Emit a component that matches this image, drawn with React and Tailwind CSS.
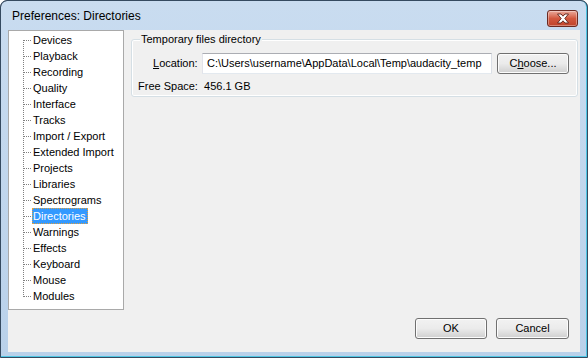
import React from 'react'

const ITEMS = [
  'Devices', 'Playback', 'Recording', 'Quality', 'Interface', 'Tracks',
  'Import / Export', 'Extended Import', 'Projects', 'Libraries', 'Spectrograms',
  'Directories', 'Warnings', 'Effects', 'Keyboard', 'Mouse', 'Modules',
]

const SELECTED = 'Directories'

const font = { fontFamily: '"Liberation Sans", Arial, sans-serif' }

function Branch({ first, last }) {
  return (
    <svg width="9" height="16" className="shrink-0" shapeRendering="crispEdges">
      <line x1="0.5" y1={first ? 8 : 0} x2="0.5" y2={last ? 9 : 16} stroke="#808080" strokeDasharray="1 1" />
      <line x1="1" y1="8.5" x2="9" y2="8.5" stroke="#808080" strokeDasharray="1 1" />
    </svg>
  )
}

function Button({ children, className = '' }) {
  return (
    <button
      className={`h-[21px] rounded-[3px] border border-[#707070] bg-gradient-to-b from-[#f2f2f2] via-[#ebebeb] to-[#cfcfcf]
                  shadow-[inset_0_0_0_1px_#fcfcfc] text-[11px] text-black ${className}`}
    >
      {children}
    </button>
  )
}

function CloseButton() {
  return (
    <div className="w-[31px] h-[17px] rounded-[3px] border border-[#6b2a22] bg-gradient-to-b from-[#e9a99b] via-[#d2583f] to-[#c0432a]
                    shadow-[inset_0_0_0_1px_rgba(255,255,255,0.35)] flex items-center justify-center mt-[9px]">
      <svg width="14" height="11" viewBox="0 0 14 11">
        <path d="M1.5 1 L5 1 L7 3.2 L9 1 L12.5 1 L8.8 5.5 L12.5 10 L9 10 L7 7.8 L5 10 L1.5 10 L5.2 5.5 Z"
              fill="#ffffff" stroke="#5a2019" strokeWidth="0.9" strokeLinejoin="round" />
      </svg>
    </div>
  )
}

export default function App() {
  return (
    <div className="w-[588px] h-[358px] bg-white" style={font}>
      <div className="w-full h-full border border-[#354a60] rounded-t-[7px] bg-[#2f4258] overflow-hidden">
        <div className="w-full h-full border-r border-b border-[#4fc6e4] rounded-t-[6px] bg-gradient-to-b from-[#c9dcf0] to-[#b9d1ea] flex flex-col">
          {/* Title bar */}
          <div className="h-[29px] flex items-start pl-[11px] pr-[8px] shrink-0">
            <span className="text-[12px] text-black mt-[8px] flex-1 leading-[14px]">Preferences: Directories</span>
            <CloseButton />
          </div>

          {/* Client area */}
          <div className="ml-[7px] w-[572px] h-[322px] bg-[#f0f0f0] flex flex-col">
            <div className="flex">
              {/* Tree */}
              <div className="w-[117px] h-[280px] bg-white border border-[#a9a9a9] pt-[1px] pl-[14px]">
                {ITEMS.map((item, i) => (
                  <div key={item} className="flex items-center h-[16px]">
                    <Branch first={i === 0} last={i === ITEMS.length - 1} />
                    <span
                      className={`h-[16px] leading-[14px] text-[11px] whitespace-nowrap border
                        ${item === SELECTED
                          ? 'bg-[#3399ff] text-white border-dotted border-[#e0a040] pr-[1px]'
                          : 'text-black border-transparent'}`}
                    >
                      {item}
                    </span>
                  </div>
                ))}
              </div>

              {/* Page */}
              <div className="flex-1 pl-[7px] pr-[2px] pt-[9px]">
                <div className="relative border border-[#d5dfe5] rounded-[3px] shadow-[inset_0_0_0_1px_#ffffff] pt-[13px] pb-[4px] pl-[5px] pr-[8px]">
                  <span className="absolute -top-[7px] left-[8px] bg-[#f0f0f0] px-[1px] text-[11px] leading-[13px] text-black">
                    Temporary files directory
                  </span>
                  <div className="flex items-center h-[21px]">
                    <span className="text-[11px] text-black ml-[16px] w-[44px]"><u>L</u>ocation:</span>
                    <div className="ml-[5px] w-[290px] h-[21px] bg-white border border-[#abadb3] border-l-[#e2e3ea] border-r-[#dbdfe6] border-b-[#e3e9ef] flex items-center pl-[4px] text-[11px] text-black whitespace-nowrap overflow-hidden">
                      C:\Users\username\AppData\Local\Temp\audacity_temp
                    </div>
                    <Button className="ml-[5px] w-[72px]">C<u>h</u>oose...</Button>
                  </div>
                  <div className="mt-[6px] text-[11px] leading-[12px] text-black pl-[1px]">
                    Free Space:&nbsp; 456.1 GB
                  </div>
                </div>
              </div>
            </div>

            {/* Buttons */}
            <div className="flex justify-end gap-[9px] pr-[11px] mt-[8px]">
              <Button className="w-[72px]">OK</Button>
              <Button className="w-[73px]">Cancel</Button>
            </div>
          </div>
        </div>
      </div>
    </div>
  )
}
